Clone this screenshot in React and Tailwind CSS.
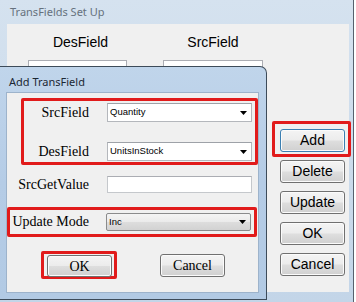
const btn =
  "h-[23px] w-[65px] rounded-[3px] border border-[#707070] bg-[linear-gradient(to_bottom,#f4f4f4_0%,#ececec_48%,#dedede_52%,#d0d0d0_100%)] flex items-center justify-center text-[14px] text-black font-['Liberation_Sans',sans-serif] shadow-[inset_0_0_0_1px_#fbfbfb]";

const serifBtn =
  "h-[22px] w-[65px] rounded-[3px] border border-[#707070] bg-[linear-gradient(to_bottom,#f4f4f4_0%,#ececec_48%,#dedede_52%,#d0d0d0_100%)] flex items-center justify-center text-[14px] text-black font-['Liberation_Serif',serif] shadow-[inset_0_0_0_1px_#fbfbfb]";

function Arrow() {
  return (
    <svg width="7" height="4" viewBox="0 0 7 4" className="mr-[4px] shrink-0">
      <path d="M0 0H7L3.5 4Z" fill="#000" />
    </svg>
  );
}

function Combo({ text }) {
  return (
    <div className="ml-[18px] h-[19px] w-[145px] border border-[#b4b7bc] border-t-[#9ea2a8] bg-white flex items-center justify-between">
      <span className="pl-[2px] text-[9.5px] text-black font-['Liberation_Sans',sans-serif]">{text}</span>
      <Arrow />
    </div>
  );
}

export default function App() {
  return (
    <div className="relative w-[356px] h-[302px] overflow-hidden bg-white">
      {/* Outer window */}
      <div className="absolute left-0 top-0 w-[354px] h-[302px] bg-gradient-to-b from-[#d5e2ef] to-[#c3d5e8] border-r border-[#56616d] flex flex-col">
        <div className="h-[24px] pl-[10px] pt-[5px] leading-[14px] text-[11px] text-[#66717d] font-['Noto_Sans',sans-serif]">
          TransFields Set Up
        </div>
        <div className="ml-[7px] w-[342px] h-[268px] bg-[#f0f0f0] flex">
          <div className="ml-[21px] flex gap-[36px]">
            <div className="w-[99px] flex flex-col items-center pt-[10px]">
              <div className="h-[16px] leading-[16px] text-[14px] text-black font-['Liberation_Sans',sans-serif] translate-x-[3px]">DesField</div>
              <div className="mt-[10px] w-[99px] h-[22px] bg-white border border-[#abadb3]" />
            </div>
            <div className="w-[100px] flex flex-col items-center pt-[10px]">
              <div className="h-[16px] leading-[16px] text-[14px] text-black font-['Liberation_Sans',sans-serif]">SrcField</div>
              <div className="mt-[10px] w-[100px] h-[22px] bg-white border border-[#abadb3]" />
            </div>
          </div>
          <div className="ml-[17px] pt-[105px] flex flex-col gap-[8px]">
            <div className="relative">
              <div className={btn.replace("border-[#707070]", "border-[#3c7fb1]")}>Add</div>
              <div className="absolute -left-[8px] -right-[6px] -top-[8px] -bottom-[5px] border-[3px] border-[#e11b1b] rounded-[2px]" />
            </div>
            <div className={btn}>Delete</div>
            <div className={btn}>Update</div>
            <div className={btn}>OK</div>
            <div className={btn}>Cancel</div>
          </div>
        </div>
      </div>

      {/* Inner dialog */}
      <div className="absolute left-0 top-[66px] w-[267px] h-[234px] rounded-tr-[7px] border border-l-0 border-[#3d4b59] bg-gradient-to-b from-[#c0d5eb] via-[#b5cce6] to-[#b2cae4] flex flex-col">
        <div className="h-[25px] pl-[9px] pt-[8px] leading-[14px] text-[11px] text-[#1b2733] font-['Noto_Sans',sans-serif]">
          Add TransField
        </div>
        <div className="ml-[6px] w-[253px] h-[201px] bg-[#f0f0f0] border border-[#9db3cb] flex flex-col">
          {/* Red group 1 */}
          <div className="ml-[14px] mt-[5px] w-[237px] h-[67px] border-[3px] border-[#e11b1b] rounded-[2px] flex flex-col pt-[2px] gap-[20px]">
            <div className="flex items-center">
              <div className="w-[65px] text-right text-[14px] leading-[16px] text-black font-['Liberation_Serif',serif]">SrcField</div>
              <Combo text="Quantity" />
            </div>
            <div className="flex items-center">
              <div className="w-[65px] text-right text-[14px] leading-[16px] text-black font-['Liberation_Serif',serif]">DesField</div>
              <Combo text="UnitsInStock" />
            </div>
          </div>
          {/* SrcGetValue */}
          <div className="mt-[11px] flex items-center">
            <div className="w-[82px] text-right text-[14px] leading-[16px] text-black font-['Liberation_Serif',serif]">SrcGetValue</div>
            <div className="ml-[18px] h-[17px] w-[145px] bg-white border border-[#c5c8cc] border-t-[#abadb3]" />
          </div>
          {/* Update Mode */}
          <div className="ml-0 mt-[14px] w-[250px] h-[30px] border-[3px] border-[#e11b1b] rounded-[2px] flex items-center">
            <div className="w-[79px] text-right text-[14px] leading-[16px] text-black font-['Liberation_Serif',serif]">Update Mode</div>
            <div className="ml-[17px] h-[18px] w-[145px] rounded-[2px] border border-[#8a8b8c] bg-[linear-gradient(to_bottom,#f4f4f4_0%,#ebebeb_48%,#dddddd_52%,#d2d2d2_100%)] flex items-center justify-between">
              <span className="pl-[2px] text-[9.5px] text-black font-['Liberation_Sans',sans-serif]">Inc</span>
              <Arrow />
            </div>
          </div>
          {/* OK / Cancel */}
          <div className="mt-[14px] flex items-start">
            <div className="ml-[34px] h-[28px] w-[76px] border-[3px] border-[#e11b1b] rounded-[2px] pt-[1px] pl-[3px]">
              <div className={serifBtn}>OK</div>
            </div>
            <div className="ml-[43px] mt-[3px]">
              <div className={serifBtn.replace("h-[22px]", "h-[23px]")}>Cancel</div>
            </div>
          </div>
        </div>
      </div>
    </div>
  );
}
